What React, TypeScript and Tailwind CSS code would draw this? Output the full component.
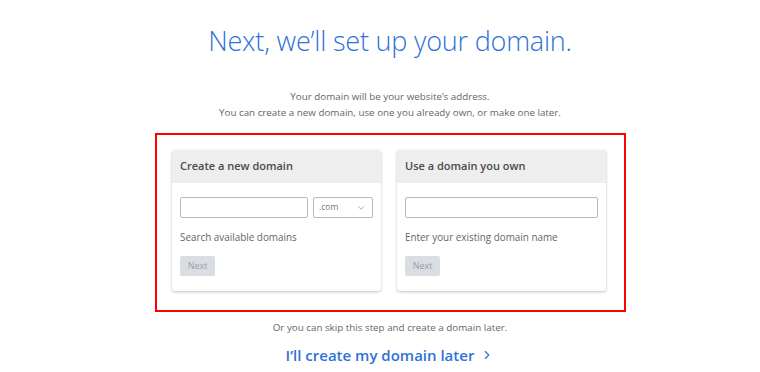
import { ChevronDown, ChevronRight } from "lucide-react";

const font = { fontFamily: '"Open Sans", "Liberation Sans", sans-serif' };

function Card({
  title,
  hint,
  withTld,
}: {
  title: string;
  hint: string;
  withTld?: boolean;
}) {
  return (
    <div className="w-[209px] h-[141px] bg-white rounded-[3px] shadow-[0_1px_3px_rgba(0,0,0,0.25)] overflow-hidden">
      <div className="h-[33px] bg-[#eeeeee] flex items-center px-2 text-[11px] font-semibold text-[#4a4a4a]">
        {title}
      </div>
      <div className="px-2 pt-[14px]">
        <div className="flex gap-[5px]">
          <div className="flex-1 h-[21px] border border-[#b5bac1] rounded-[2px]" />
          {withTld && (
            <div className="w-[60px] h-[21px] border border-[#b5bac1] rounded-[2px] flex items-center justify-between pl-[5px] pr-[6px] text-[8.5px] text-[#777]">
              .com
              <ChevronDown className="w-[10px] h-[10px] text-[#777]" strokeWidth={1.5} />
            </div>
          )}
        </div>
        <div className="mt-[12px] text-[9.9px] text-[#666]">{hint}</div>
        <div className="mt-[11px] w-[35px] h-[20px] bg-[#dadde1] rounded-[2px] flex items-center justify-center text-[9px] text-[#9a9ea3]">
          Next
        </div>
      </div>
    </div>
  );
}

export default function App() {
  return (
    <div className="w-[760px] h-[372px] bg-white flex flex-col items-center pl-[20px]" style={font}>
      <h1 className="mt-[23px] text-[27px] font-light text-[#2f72d6] leading-[36px] tracking-[-0.2px]">
        Next, we’ll set up your domain.
      </h1>
      <div className="mt-[30px] text-center text-[9.8px] leading-[16px] text-[#666]">
        <p>Your domain will be your website’s address.</p>
        <p>You can create a new domain, use one you already own, or make one later.</p>
      </div>
      <div className="mt-[12px] w-[471px] h-[179px] border-[2.5px] border-[#ff0000] flex justify-center gap-4 pt-[15px] pr-[2px]">
        <Card title="Create a new domain" hint="Search available domains" withTld />
        <Card title="Use a domain you own" hint="Enter your existing domain name" />
      </div>
      <p className="mt-[9px] text-[9.8px] text-[#666]">
        Or you can skip this step and create a domain later.
      </p>
      <a className="mt-[8px] flex items-center gap-[6px] text-[15px] font-semibold text-[#2f72d6]">
        I’ll create my domain later
        <ChevronRight className="w-[14px] h-[14px]" strokeWidth={2} />
      </a>
    </div>
  );
}
